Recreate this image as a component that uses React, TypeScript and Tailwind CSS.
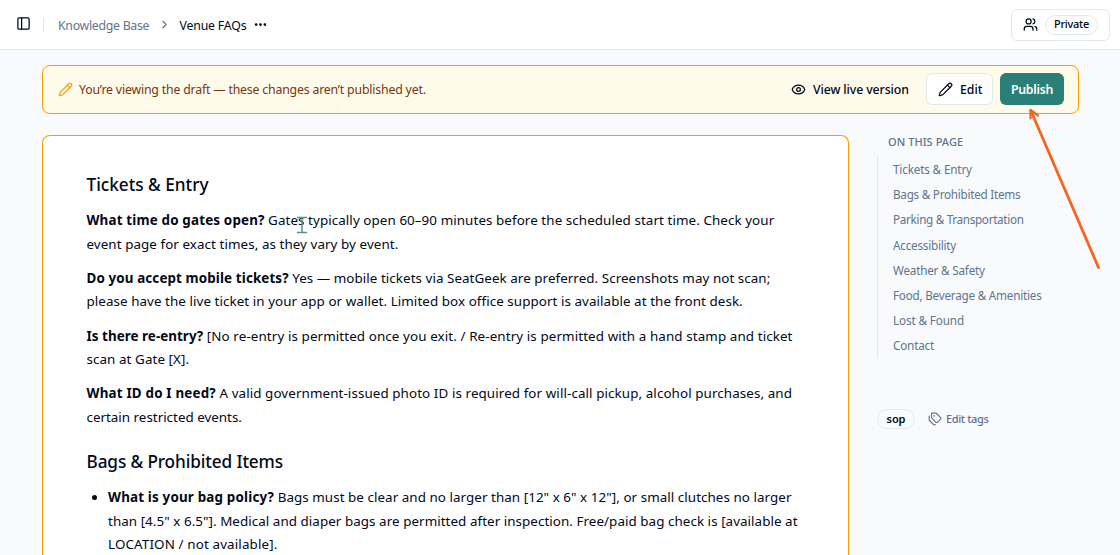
import type { ReactNode } from 'react';
import { ChevronRight, Ellipsis, Eye, PanelLeft, Pencil, Tags, Users } from 'lucide-react';

function Line({ children }: { children: ReactNode }) {
  return <span className="block whitespace-nowrap">{children}</span>;
}

const toc: [string, string][] = [
  ['Tickets & Entry', 'tracking-[-0.15px]'],
  ['Bags & Prohibited Items', 'tracking-[-0.25px]'],
  ['Parking & Transportation', 'tracking-[-0.31px]'],
  ['Accessibility', 'tracking-[-0.22px]'],
  ['Weather & Safety', 'tracking-[-0.2px]'],
  ['Food, Beverage & Amenities', 'tracking-[-0.22px]'],
  ['Lost & Found', 'tracking-[-0.12px]'],
  ['Contact', 'tracking-[-0.18px]'],
];

function Header() {
  return (
    <header className="flex h-[50px] shrink-0 items-center border-b border-slate-200 bg-white pr-2.5 pl-4 text-[12.3px]">
      <PanelLeft size={15} strokeWidth={2} className="mb-0.5" />
      <span className="ml-3 h-3.5 w-px bg-slate-200" />
      <span className="ml-3.5 w-[92px] pt-[3px] tracking-[-0.28px] whitespace-nowrap text-slate-500">Knowledge Base</span>
      <ChevronRight size={13} className="ml-2 text-slate-500" />
      <span className="ml-[8.500px] w-[67.500px] pt-[3px] tracking-[-0.18px] whitespace-nowrap">Venue FAQs</span>
      <Ellipsis size={15} strokeWidth={2.4} className="ml-[6px]" />
      <button className="ml-auto flex h-8 w-[99px] items-center rounded-md border border-slate-200 bg-white pl-[11px]">
        <Users size={15} />
        <span className="ml-[7px] flex h-5 w-[53px] items-center justify-center rounded-full border border-slate-200 text-[11px] font-medium tracking-[-0.3px]">
          Private
        </span>
      </button>
    </header>
  );
}

function DraftBanner() {
  return (
    <section className="flex h-[49px] items-center rounded-lg border border-amber-500 bg-[#fffbeb] pr-3.5 pb-px pl-[15px] text-[12.3px]">
      <Pencil size={15} strokeWidth={1.8} className="text-amber-500" />
      <span className="ml-[6px] pt-[2px] tracking-[-0.181px] whitespace-nowrap text-[#78350f]">
        You’re viewing the draft — these changes aren’t published yet.
      </span>
      <button className="ml-auto flex items-center font-medium whitespace-nowrap">
        <Eye size={15} />
        <span className="ml-[7px] w-24 pt-[2px] text-left tracking-[-0.1px]">View live version</span>
      </button>
      <button className="ml-[17px] flex h-8 w-[67px] items-center rounded-md border border-slate-200 bg-white pl-[11px] font-medium">
        <Pencil size={15} />
        <span className="ml-[7px] pt-[2px]">Edit</span>
      </button>
      <button className="ml-[7px] h-8 w-16 rounded-md bg-[#2a7f77] pt-[2px] font-semibold tracking-[-0.25px] text-white">
        Publish
      </button>
    </section>
  );
}

function Article() {
  return (
    <article className="w-[807px] shrink-0 rounded-t-lg border border-b-0 border-amber-500 bg-white pt-9 pl-[43.500px] text-[13.4px] leading-[23.4px]">
      <h2 className="text-[17.2px] leading-[25px] font-medium">Tickets &amp; Entry</h2>
      <div className="mt-[12.300px] flex flex-col gap-[10.8px]">
        <p>
          <Line>
            <b className="tracking-[0.17px]">What time do gates open?</b>{' '}
            <span className="tracking-[0.075px]">
              Gates typically open 60–90 minutes before the scheduled start time. Check your
            </span>
          </Line>
          <Line>
            <span className="tracking-[0.07px]">event page for exact times, as they vary by event.</span>
          </Line>
        </p>
        <p>
          <Line>
            <b className="tracking-[0.12px]">Do you accept mobile tickets?</b>{' '}
            <span className="tracking-[0.055px]">
              Yes — mobile tickets via SeatGeek are preferred. Screenshots may not scan;
            </span>
          </Line>
          <Line>
            <span className="tracking-[0.065px]">
              please have the live ticket in your app or wallet. Limited box office support is available at the front desk.
            </span>
          </Line>
        </p>
        <p>
          <Line>
            <b className="tracking-[0.05px]">Is there re-entry?</b>{' '}
            <span className="tracking-[0.1px]">
              [No re-entry is permitted once you exit. / Re-entry is permitted with a hand stamp and ticket
            </span>
          </Line>
          <Line>
            <span className="tracking-[0.08px]">scan at Gate [X].</span>
          </Line>
        </p>
        <p>
          <Line>
            <b className="tracking-[0.19px]">What ID do I need?</b>{' '}
            <span className="tracking-[0.09px]">
              A valid government-issued photo ID is required for will-call pickup, alcohol purchases, and
            </span>
          </Line>
          <Line>
            <span>certain restricted events.</span>
          </Line>
        </p>
      </div>
      <h2 className="mt-[20px] text-[17.2px] leading-[25px] font-medium tracking-[-0.11px]">
        Bags &amp; Prohibited Items
      </h2>
      <ul className="mt-[12.200px] list-disc pl-[21.500px]">
        <li>
          <Line>
            <b className="tracking-[0.18px]">What is your bag policy?</b>{' '}
            <span className="tracking-[0.055px]">
              Bags must be clear and no larger than [12" x 6" x 12"], or small clutches no larger
            </span>
          </Line>
          <Line>
            <span className="tracking-[0.055px]">
              than [4.5" x 6.5"]. Medical and diaper bags are permitted after inspection. Free/paid bag check is [available at
            </span>
          </Line>
          <Line>
            <span className="tracking-[0.13px]">LOCATION / not available].</span>
          </Line>
        </li>
      </ul>
    </article>
  );
}

function Sidebar() {
  return (
    <aside className="ml-7 w-[200px] text-slate-500">
      <h3 className="pl-[11px] text-[11px] leading-[14px] font-medium tracking-[0.05px]">ON THIS PAGE</h3>
      <nav className="mt-[7px] flex h-[202px] flex-col border-l border-slate-200 pt-[1.300px] pl-[15px] text-[11.7px]">
        {toc.map(([label, tracking]) => (
          <a key={label} className={`flex h-[25.2px] shrink-0 items-center whitespace-nowrap ${tracking}`}>
            {label}
          </a>
        ))}
      </nav>
      <div className="mt-[51px] flex items-center text-[11px]">
        <span className="flex h-5 w-[38px] items-center justify-center rounded-full border border-slate-200 font-semibold tracking-[-0.1px] text-slate-950">
          sop
        </span>
        <Tags size={14} className="ml-[13px]" />
        <span className="ml-[4px] font-medium tracking-[-0.36px] whitespace-nowrap">Edit tags</span>
      </div>
    </aside>
  );
}

export default function App() {
  return (
    <div className="relative flex h-[555px] w-[1120px] flex-col overflow-hidden bg-[#f8fafc] font-['Noto_Sans',sans-serif] text-[#020817]">
      <Header />
      <main className="flex flex-col pt-[15px] pr-[41px] pl-[42px]">
        <DraftBanner />
        <div className="mt-[21px] flex items-start">
          <Article />
          <Sidebar />
        </div>
      </main>
      <svg
        className="pointer-events-none absolute top-[104px] left-[1020px]"
        width="90"
        height="170"
        viewBox="0 0 90 170"
        fill="none"
        stroke="#f4661f"
        strokeWidth="2.8"
        strokeLinecap="round"
        strokeLinejoin="round"
      >
        <path d="M78.500 163.500 10.800 6.500" />
        <path strokeWidth="2.2" d="M10.500 14.500 10.500 6 18 11.500" />
      </svg>
      <svg
        className="pointer-events-none absolute top-[216px] left-[296px]"
        width="12"
        height="18"
        viewBox="0 0 12 18"
        fill="none"
        stroke="#4f9690"
        strokeWidth="1.5"
      >
        <path d="M1 1.500H11M6 1.500V16.500M1 16.500H11" />
      </svg>
    </div>
  );
}
